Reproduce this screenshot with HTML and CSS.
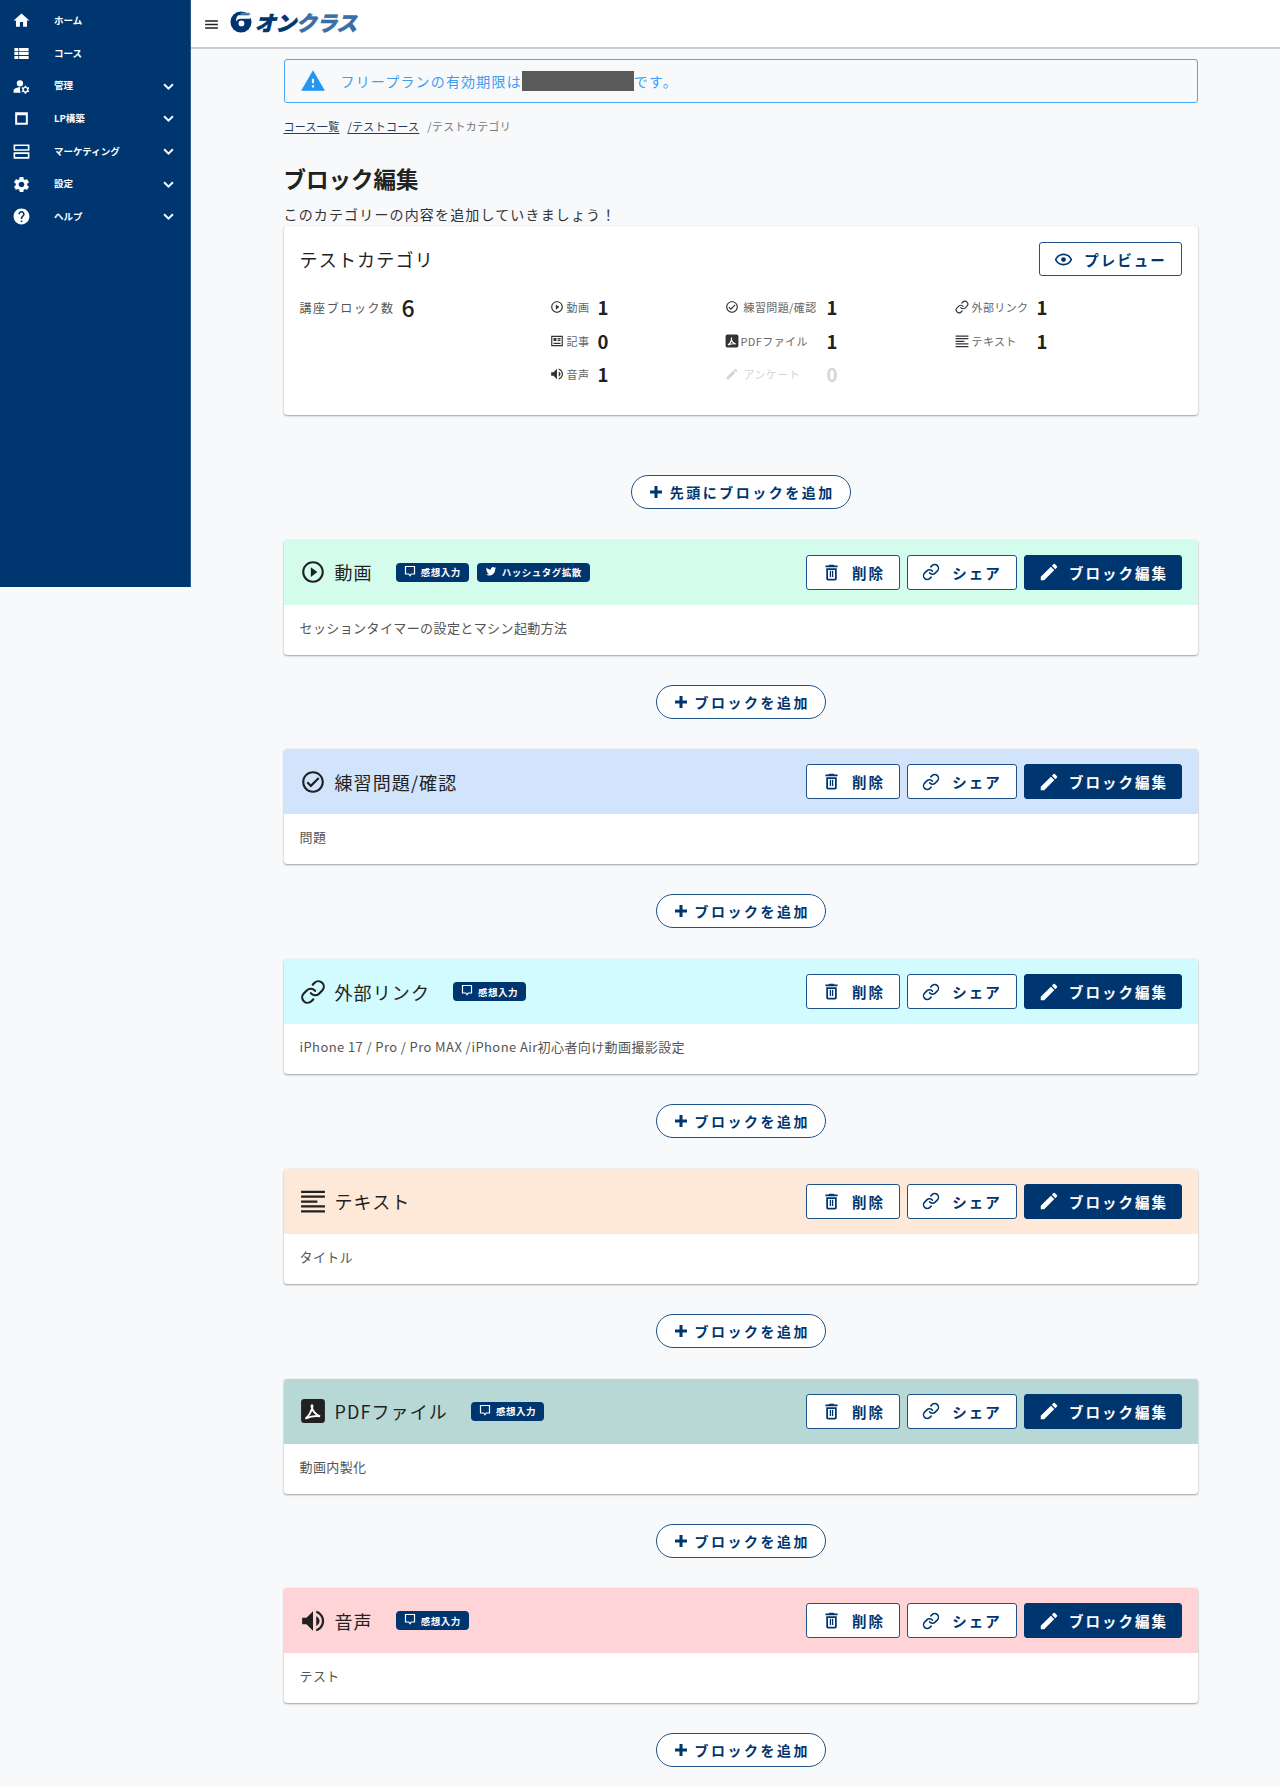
FILE: index.html
```html
<!DOCTYPE html>
<html lang="ja">
<head>
<meta charset="utf-8">
<title>ブロック編集</title>
<link rel="stylesheet" href="styles.css">
</head>
<body>
<svg class="defs" width="0" height="0" aria-hidden="true">
  <symbol id="i-home" viewBox="0 0 24 24"><path d="M10 20v-6h4v6h5v-8h3L12 3 2 12h3v8z"/></symbol>
  <symbol id="i-list" viewBox="0 0 24 24"><path d="M3 14h5v-4H3v4zm0 5h5v-4H3v4zM3 9h5V5H3v4zm6 5h12v-4H9v4zm0 5h12v-4H9v4zM9 5v4h12V5H9z"/></symbol>
  <symbol id="i-manage" viewBox="0 0 24 24"><path d="M10 4a4 4 0 1 0 0 8 4 4 0 0 0 0-8zM10.67 13.02C10.45 13.01 10.23 13 10 13c-2.42 0-4.68.67-6.61 1.82C2.51 15.34 2 16.32 2 17.35V20h9.26c-.79-1.13-1.26-2.51-1.26-4 0-1.07.25-2.07.67-2.98zM20.75 16c0-.22-.03-.42-.06-.63l1.14-1.01-1-1.73-1.45.49c-.32-.27-.68-.48-1.08-.63L18 11h-2l-.3 1.49c-.4.15-.76.36-1.08.63l-1.45-.49-1 1.73 1.14 1.01c-.03.21-.06.41-.06.63s.03.42.06.63l-1.14 1.01 1 1.73 1.45-.49c.32.27.68.48 1.08.63L16 21h2l.3-1.49c.4-.15.76-.36 1.08-.63l1.45.49 1-1.73-1.14-1.01c.03-.21.06-.41.06-.63zM17 18c-1.1 0-2-.9-2-2s.9-2 2-2 2 .9 2 2-.9 2-2 2z"/></symbol>
  <symbol id="i-square" viewBox="0 0 24 24"><path d="M4 4h16v16H4V4zm2.500 4v9.500h11V8h-11z" fill-rule="evenodd"/></symbol>
  <symbol id="i-rows" viewBox="0 0 24 24"><path fill-rule="evenodd" d="M2 3h20v8H2V3zm2 2v4h16V5H4zM2 13h20v8H2v-8zm2 2v4h16v-4H4z"/></symbol>
  <symbol id="i-gear" viewBox="0 0 24 24"><path d="M19.14 12.94c.04-.3.06-.61.06-.94 0-.32-.02-.64-.07-.94l2.03-1.58a.49.49 0 0 0 .12-.61l-1.92-3.32a.488.488 0 0 0-.59-.22l-2.39.96c-.5-.38-1.03-.7-1.62-.94l-.36-2.54a.484.484 0 0 0-.48-.41h-3.84c-.24 0-.43.17-.47.41l-.36 2.54c-.59.24-1.13.57-1.62.94l-2.39-.96c-.22-.08-.47 0-.59.22L2.74 8.87c-.12.21-.08.47.12.61l2.03 1.58c-.05.3-.09.63-.09.94s.02.64.07.94l-2.03 1.58a.49.49 0 0 0-.12.61l1.92 3.32c.12.22.37.29.59.22l2.39-.96c.5.38 1.03.7 1.62.94l.36 2.54c.05.24.24.41.48.41h3.84c.24 0 .44-.17.47-.41l.36-2.54c.59-.24 1.13-.56 1.62-.94l2.39.96c.22.08.47 0 .59-.22l1.92-3.32c.12-.22.07-.47-.12-.61l-2.01-1.58zM12 15.6c-1.98 0-3.6-1.62-3.6-3.6s1.62-3.6 3.6-3.6 3.6 1.62 3.6 3.6-1.62 3.6-3.6 3.6z"/></symbol>
  <symbol id="i-help" viewBox="0 0 24 24"><path d="M12 2C6.48 2 2 6.48 2 12s4.48 10 10 10 10-4.48 10-10S17.52 2 12 2zm1 17h-2v-2h2v2zm2.07-7.75l-.9.92C13.45 12.9 13 13.5 13 15h-2v-.5c0-1.1.45-2.1 1.17-2.83l1.24-1.26c.37-.36.59-.86.59-1.41 0-1.1-.9-2-2-2s-2 .9-2 2H8c0-2.21 1.79-4 4-4s4 1.79 4 4c0 .88-.36 1.68-.93 2.25z"/></symbol>
  <symbol id="i-chevron" viewBox="0 0 24 24"><path d="M5 8.500l7 7 7-7" fill="none" stroke="currentColor" stroke-width="3.200"/></symbol>
  <symbol id="i-menu" viewBox="0 0 24 24"><path d="M3 18h18v-2H3zm0-5h18v-2H3zm0-7v2h18V6z"/></symbol>
  <symbol id="i-warning" viewBox="0 0 24 24"><path d="M1 21h22L12 2 1 21zm12-3h-2v-2h2v2zm0-4h-2v-4h2v4z"/></symbol>
  <symbol id="i-eye" viewBox="0 0 24 24"><path d="M12 6.500a9.770 9.770 0 0 1 8.820 5.500 9.770 9.770 0 0 1-8.820 5.500A9.770 9.770 0 0 1 3.180 12 9.770 9.770 0 0 1 12 6.500m0-2C7 4.500 2.730 7.610 1 12c1.730 4.390 6 7.500 11 7.500s9.270-3.110 11-7.500c-1.730-4.390-6-7.500-11-7.500z"/><circle cx="12" cy="12" r="3"/></symbol>
  <symbol id="i-play" viewBox="0 0 24 24"><path d="M10 16.500l6-4.500-6-4.500v9zM12 2C6.480 2 2 6.480 2 12s4.480 10 10 10 10-4.480 10-10S17.520 2 12 2zm0 18c-4.410 0-8-3.590-8-8s3.590-8 8-8 8 3.590 8 8-3.590 8-8 8z"/></symbol>
  <symbol id="i-check" viewBox="0 0 24 24"><path d="M12 2C6.480 2 2 6.480 2 12s4.480 10 10 10 10-4.480 10-10S17.520 2 12 2zm0 18c-4.410 0-8-3.590-8-8s3.590-8 8-8 8 3.590 8 8-3.590 8-8 8z"/><path d="M16.590 7.580 10 14.170l-2.590-2.580L6 13l4 4 8-8z"/></symbol>
  <symbol id="i-link" viewBox="0 0 24 24"><path fill="none" stroke="currentColor" stroke-width="2" stroke-linecap="round" d="M10 13a5 5 0 0 0 7.540.54l3-3a5 5 0 0 0-7.070-7.070l-1.720 1.710M14 11a5 5 0 0 0-7.540-.54l-3 3a5 5 0 0 0 7.070 7.070l1.710-1.710"/></symbol>
  <symbol id="i-text" viewBox="0 0 24 24"><path d="M1 2.500h22v2H1zM1 7h22v2H1zM1 11.500h15v2H1zM1 16h22v2H1zM1 20.500h22v2H1z"/></symbol>
  <symbol id="i-pdf" viewBox="0 0 24 24"><path fill-rule="evenodd" d="M4 1h16a3 3 0 0 1 3 3v16a3 3 0 0 1-3 3H4a3 3 0 0 1-3-3V4a3 3 0 0 1 3-3z"/><path d="M5 19c3-2 6-7 6.500-11.500.1-1-.9-1-.9 0 .5 4 4 8.500 8 9.500-3.500-.7-8-.3-13.600 2z" fill="none" stroke="#fff" stroke-width="1.800"/></symbol>
  <symbol id="i-volume" viewBox="0 0 24 24"><path d="M2 9v6h4l6 6V3L6 9H2zm13-1.500v9c1.800-.8 3-2.500 3-4.500s-1.200-3.700-3-4.500zM15 2.500v2.200c3 1 5.200 3.900 5.200 7.300s-2.200 6.300-5.200 7.300v2.200c4.200-1 7.300-4.800 7.300-9.500S19.200 3.500 15 2.500z"/></symbol>
  <symbol id="i-article" viewBox="0 0 24 24"><path fill-rule="evenodd" d="M2 3h20v18H2V3zm2 2v14h16V5H4zm2 2h5v5H6V7zm7 0h5v2h-5V7zm0 3h5v2h-5v-2zM6 15h12v2H6v-2z"/></symbol>
  <symbol id="i-pencil" viewBox="0 0 24 24"><path d="M3 17.250V21h3.750L17.810 9.940l-3.750-3.750L3 17.250zM20.710 7.040a1 1 0 0 0 0-1.410l-2.340-2.340a1 1 0 0 0-1.410 0l-1.830 1.830 3.750 3.750 1.830-1.830z"/></symbol>
  <symbol id="i-trash" viewBox="0 0 24 24"><path d="M16 9v10H8V9h8m-1.500-6h-5l-1 1H5v2h14V4h-3.500l-1-1zM18 7H6v12c0 1.100.9 2 2 2h8c1.100 0 2-.9 2-2V7z"/><path d="M10 10h1.500v7H10zM12.500 10H14v7h-1.500z"/></symbol>
  <symbol id="i-plus" viewBox="0 0 24 24"><path d="M20 14h-6v6h-4v-6H4v-4h6V4h4v6h6v4z"/></symbol>
  <symbol id="i-comment" viewBox="0 0 24 24"><path d="M3 3h18v15h-6.500L12 21.500 9.500 18H3z" fill="none" stroke="currentColor" stroke-width="2.400"/></symbol>
  <symbol id="i-twitter" viewBox="0 0 24 24"><path d="M22.460 6c-.77.35-1.600.58-2.460.69.88-.53 1.560-1.370 1.880-2.380-.83.5-1.750.85-2.720 1.050C18.370 4.500 17.260 4 16 4c-2.350 0-4.270 1.920-4.270 4.290 0 .34.04.67.11.98C8.280 9.090 5.110 7.380 3 4.790c-.37.63-.58 1.370-.58 2.150 0 1.490.75 2.810 1.910 3.560-.71 0-1.370-.2-1.950-.5v.03c0 2.080 1.480 3.820 3.440 4.210a4.220 4.220 0 0 1-1.930.07 4.280 4.280 0 0 0 4 2.980 8.521 8.521 0 0 1-5.330 1.840c-.34 0-.68-.02-1.020-.06C3.440 20.290 5.700 21 8.120 21 16 21 20.330 14.460 20.330 8.790c0-.19 0-.37-.01-.56.84-.6 1.560-1.360 2.140-2.230z"/></symbol>
</svg>

<div class="app">
  <nav class="sidebar">
    <a class="nav-item"><svg class="nav-icon"><use href="#i-home"/></svg><span class="nav-label">ホーム</span></a>
    <a class="nav-item"><svg class="nav-icon"><use href="#i-list"/></svg><span class="nav-label">コース</span></a>
    <a class="nav-item"><svg class="nav-icon"><use href="#i-manage"/></svg><span class="nav-label">管理</span><svg class="nav-chevron"><use href="#i-chevron"/></svg></a>
    <a class="nav-item"><svg class="nav-icon"><use href="#i-square"/></svg><span class="nav-label">LP構築</span><svg class="nav-chevron"><use href="#i-chevron"/></svg></a>
    <a class="nav-item"><svg class="nav-icon"><use href="#i-rows"/></svg><span class="nav-label">マーケティング</span><svg class="nav-chevron"><use href="#i-chevron"/></svg></a>
    <a class="nav-item"><svg class="nav-icon"><use href="#i-gear"/></svg><span class="nav-label">設定</span><svg class="nav-chevron"><use href="#i-chevron"/></svg></a>
    <a class="nav-item"><svg class="nav-icon"><use href="#i-help"/></svg><span class="nav-label">ヘルプ</span><svg class="nav-chevron"><use href="#i-chevron"/></svg></a>
  </nav>

  <div class="main">
    <header class="topbar">
      <svg class="menu-icon"><use href="#i-menu"/></svg>
      <svg class="logo-mark" viewBox="0 0 24 24"><circle cx="12" cy="12" r="11.500" fill="#003670"/><circle cx="12.500" cy="13.500" r="3.200" fill="#fff"/><path d="M9 4.500h14.500l-1.500 4H12c-3 0-5 2-5.500 3C6.500 8.500 7 6 9 4.500z" fill="#fff"/><path d="M12 2h9l1.500 2H11z" fill="#4f7fb0"/></svg>
      <span class="logo-text">オン<span class="logo-light">クラス</span></span>
    </header>

    <main class="content">
      <div class="alert">
        <svg class="alert-icon"><use href="#i-warning"/></svg>
        <span class="alert-text">フリープランの有効期限は</span><span class="redacted"></span><span class="alert-text">です。</span>
      </div>

      <div class="crumbs">
        <a class="crumb-link">コース一覧</a>
        <a class="crumb-link">/テストコース</a>
        <span class="crumb-current">/テストカテゴリ</span>
      </div>

      <h1 class="page-title">ブロック編集</h1>
      <p class="page-sub">このカテゴリーの内容を追加していきましょう！</p>

      <section class="summary">
        <div class="summary-head">
          <h2 class="summary-title">テストカテゴリ</h2>
          <a class="btn btn-preview"><svg class="btn-icon"><use href="#i-eye"/></svg>プレビュー</a>
        </div>
        <div class="stats">
          <div class="stat-total"><span class="total-label">講座ブロック数</span><span class="stat-num total-num">6</span></div>
          <div class="stat-col col-a">
            <div class="stat"><svg class="stat-icon"><use href="#i-play"/></svg><span class="stat-label">動画</span><span class="stat-num">1</span></div>
            <div class="stat"><svg class="stat-icon"><use href="#i-article"/></svg><span class="stat-label">記事</span><span class="stat-num">0</span></div>
            <div class="stat"><svg class="stat-icon"><use href="#i-volume"/></svg><span class="stat-label">音声</span><span class="stat-num">1</span></div>
          </div>
          <div class="stat-col col-b">
            <div class="stat"><svg class="stat-icon"><use href="#i-check"/></svg><span class="stat-label">練習問題/確認</span><span class="stat-num">1</span></div>
            <div class="stat stat-tight"><svg class="stat-icon"><use href="#i-pdf"/></svg><span class="stat-label">PDFファイル</span><span class="stat-num">1</span></div>
            <div class="stat stat-off"><svg class="stat-icon"><use href="#i-pencil"/></svg><span class="stat-label">アンケート</span><span class="stat-num">0</span></div>
          </div>
          <div class="stat-col col-c">
            <div class="stat"><svg class="stat-icon"><use href="#i-link"/></svg><span class="stat-label">外部リンク</span><span class="stat-num">1</span></div>
            <div class="stat"><svg class="stat-icon"><use href="#i-text"/></svg><span class="stat-label">テキスト</span><span class="stat-num">1</span></div>
          </div>
        </div>
      </section>

      <div class="add-row add-first"><a class="add-btn"><svg class="add-icon"><use href="#i-plus"/></svg>先頭にブロックを追加</a></div>

      <article class="block">
        <div class="block-head head-video">
          <svg class="block-icon"><use href="#i-play"/></svg><span class="block-title">動画</span>
          <span class="pill"><svg class="pill-icon"><use href="#i-comment"/></svg>感想入力</span>
          <span class="pill"><svg class="pill-icon"><use href="#i-twitter"/></svg>ハッシュタグ拡散</span>
          <div class="actions"><a class="btn btn-del"><svg class="btn-icon icon-trash"><use href="#i-trash"/></svg>削除</a><a class="btn btn-share"><svg class="btn-icon icon-link"><use href="#i-link"/></svg>シェア</a><a class="btn btn-edit"><svg class="btn-icon icon-pencil"><use href="#i-pencil"/></svg>ブロック編集</a></div>
        </div>
        <p class="block-body">セッションタイマーの設定とマシン起動方法</p>
      </article>
      <div class="add-row"><a class="add-btn"><svg class="add-icon"><use href="#i-plus"/></svg>ブロックを追加</a></div>

      <article class="block">
        <div class="block-head head-quiz">
          <svg class="block-icon"><use href="#i-check"/></svg><span class="block-title">練習問題/確認</span>
          <div class="actions"><a class="btn btn-del"><svg class="btn-icon icon-trash"><use href="#i-trash"/></svg>削除</a><a class="btn btn-share"><svg class="btn-icon icon-link"><use href="#i-link"/></svg>シェア</a><a class="btn btn-edit"><svg class="btn-icon icon-pencil"><use href="#i-pencil"/></svg>ブロック編集</a></div>
        </div>
        <p class="block-body">問題</p>
      </article>
      <div class="add-row"><a class="add-btn"><svg class="add-icon"><use href="#i-plus"/></svg>ブロックを追加</a></div>

      <article class="block">
        <div class="block-head head-link">
          <svg class="block-icon"><use href="#i-link"/></svg><span class="block-title">外部リンク</span>
          <span class="pill"><svg class="pill-icon"><use href="#i-comment"/></svg>感想入力</span>
          <div class="actions"><a class="btn btn-del"><svg class="btn-icon icon-trash"><use href="#i-trash"/></svg>削除</a><a class="btn btn-share"><svg class="btn-icon icon-link"><use href="#i-link"/></svg>シェア</a><a class="btn btn-edit"><svg class="btn-icon icon-pencil"><use href="#i-pencil"/></svg>ブロック編集</a></div>
        </div>
        <p class="block-body">iPhone 17 / Pro / Pro MAX /iPhone Air初心者向け動画撮影設定</p>
      </article>
      <div class="add-row"><a class="add-btn"><svg class="add-icon"><use href="#i-plus"/></svg>ブロックを追加</a></div>

      <article class="block">
        <div class="block-head head-text">
          <svg class="block-icon"><use href="#i-text"/></svg><span class="block-title">テキスト</span>
          <div class="actions"><a class="btn btn-del"><svg class="btn-icon icon-trash"><use href="#i-trash"/></svg>削除</a><a class="btn btn-share"><svg class="btn-icon icon-link"><use href="#i-link"/></svg>シェア</a><a class="btn btn-edit"><svg class="btn-icon icon-pencil"><use href="#i-pencil"/></svg>ブロック編集</a></div>
        </div>
        <p class="block-body">タイトル</p>
      </article>
      <div class="add-row"><a class="add-btn"><svg class="add-icon"><use href="#i-plus"/></svg>ブロックを追加</a></div>

      <article class="block">
        <div class="block-head head-pdf">
          <svg class="block-icon"><use href="#i-pdf"/></svg><span class="block-title">PDFファイル</span>
          <span class="pill"><svg class="pill-icon"><use href="#i-comment"/></svg>感想入力</span>
          <div class="actions"><a class="btn btn-del"><svg class="btn-icon icon-trash"><use href="#i-trash"/></svg>削除</a><a class="btn btn-share"><svg class="btn-icon icon-link"><use href="#i-link"/></svg>シェア</a><a class="btn btn-edit"><svg class="btn-icon icon-pencil"><use href="#i-pencil"/></svg>ブロック編集</a></div>
        </div>
        <p class="block-body">動画内製化</p>
      </article>
      <div class="add-row"><a class="add-btn"><svg class="add-icon"><use href="#i-plus"/></svg>ブロックを追加</a></div>

      <article class="block">
        <div class="block-head head-audio">
          <svg class="block-icon"><use href="#i-volume"/></svg><span class="block-title">音声</span>
          <span class="pill"><svg class="pill-icon"><use href="#i-comment"/></svg>感想入力</span>
          <div class="actions"><a class="btn btn-del"><svg class="btn-icon icon-trash"><use href="#i-trash"/></svg>削除</a><a class="btn btn-share"><svg class="btn-icon icon-link"><use href="#i-link"/></svg>シェア</a><a class="btn btn-edit"><svg class="btn-icon icon-pencil"><use href="#i-pencil"/></svg>ブロック編集</a></div>
        </div>
        <p class="block-body">テスト</p>
      </article>
      <div class="add-row"><a class="add-btn"><svg class="add-icon"><use href="#i-plus"/></svg>ブロックを追加</a></div>
    </main>
  </div>
</div>
</body>
</html>
```
FILE: styles.css
```css
* { box-sizing: border-box; }
html, body { margin: 0; padding: 0; }
body {
  background: #f8f9fb;
  color: #212121;
  font-family: "Noto Sans CJK JP", "Noto Sans", sans-serif;
  font-size: 14px;
}
svg { fill: currentColor; flex: none; display: block; }
.defs { position: absolute; }
a { color: inherit; text-decoration: none; }
h1, h2, p { margin: 0; font-weight: 400; }

.app { display: flex; align-items: flex-start; min-height: 1787px; }

/* sidebar */
.sidebar {
  width: 191px;
  height: 587px;
  flex: none;
  background: #003670;
  color: #fff;
  padding-top: 4.5px;
  border-right: 1px solid #2c5a8c;
}
.nav-item { display: flex; align-items: center; height: 32.67px; }
.nav-icon { width: 19px; height: 19px; margin-left: 11.5px; }
.nav-label { margin-left: 23.5px; font-size: 9.5px; font-weight: 700; line-height: 1; flex: 1; }
.nav-chevron { width: 15px; height: 15px; margin-right: 14px; }

/* topbar */
.main { flex: 1; min-width: 0; }
.topbar {
  height: 49px;
  background: #fff;
  border-bottom: 2px solid #cbcbcb;
  display: flex;
  align-items: center;
  padding-left: 12px;
  padding-bottom: 3px;
}
.menu-icon { width: 17px; height: 17px; color: #212121; margin-top: 4px; }
.logo-mark { width: 22px; height: 22px; margin-left: 10px; }
.logo-text {
  display: inline-block;
  margin-left: 5px;
  color: #003670;
  font-size: 21px;
  line-height: 22px;
  font-weight: 900;
  letter-spacing: -.5px;
  -webkit-text-stroke: .5px currentColor;
  transform: skewX(-14deg);
}
.logo-light { color: #3a6ea5; }

/* content */
.content { width: 914.5px; margin-left: 92.5px; }
.alert {
  margin-top: 10px;
  height: 44px;
  border: 1px solid #4aa5f5;
  border-radius: 3px;
  display: flex;
  align-items: center;
  padding-left: 15px;
}
.alert-icon { width: 26px; height: 26px; color: #2196f3; margin-right: 15px; }
.alert-text { color: #3f9df0; letter-spacing: 1.180px; font-size: 14px; }
.redacted { width: 112px; height: 20px; background: #5a5a5a; }

.crumbs { display: flex; gap: 8px; margin-top: 13px; height: 20px; align-items: center; font-size: 11px; letter-spacing: .3px; }
.crumb-link { color: #233c5c; text-decoration: underline; text-underline-offset: 2px; }
.crumb-current { color: #777; }

.page-title { font-size: 22.5px; font-weight: 700; line-height: 30px; margin-top: 27px; color: #212121; }
.page-sub { font-size: 14px; letter-spacing: 1.150px; line-height: 20px; margin-top: 11px; color: #333; height: 22px; }

.summary {
  background: #fff;
  border-radius: 3px;
  height: 189px;
  box-shadow: 0 1px 2px rgba(0,0,0,.35), 0 0 1px rgba(0,0,0,.2);
  padding: 16px;
}
.summary-head { display: flex; justify-content: space-between; align-items: center; height: 34px; }
.summary-title { font-size: 18px; letter-spacing: 1.200px; color: #222; }
.stats { display: flex; margin-top: 14.5px; align-items: flex-start; }
.stat-total { width: 250px; display: flex; align-items: center; height: 33.5px; }
.total-label { font-size: 12px; letter-spacing: 1.600px; color: #555; width: 102px; }
.stat-num { font-size: 18.5px; font-weight: 700; line-height: 1; color: #212121; }
.total-num { font-size: 23px; font-weight: 500; }
.stat-col { display: flex; flex-direction: column; }
.col-a { width: 175px; --label: 48px; --label-gap: 3px; }
.col-b { width: 230px; --label: 102px; --label-gap: 5px; }
.col-c { --label: 82px; --label-gap: 3px; }
.stat-tight { --label-gap: 2px; }
.stat { height: 33.5px; display: flex; align-items: center; }
.stat-icon { width: 14px; height: 14px; color: #333; }
.stat-label { font-size: 11px; color: #666; letter-spacing: .4px; margin-left: var(--label-gap); width: calc(var(--label) - 14px - var(--label-gap)); white-space: nowrap; }
.stat-off .stat-icon, .stat-off .stat-label, .stat-off .stat-num { color: #d5d5d5; }

/* buttons */
.btn {
  display: flex;
  align-items: center;
  justify-content: center;
  border: 1px solid #1f5289;
  border-radius: 3px;
  background: #fff;
  color: #003670;
  font-size: 14.5px;
  font-weight: 700;
  letter-spacing: 2px;
  height: 35px;
}
.btn-icon { width: 19px; height: 19px; margin-right: 11px; }
.icon-trash { width: 21px; height: 21px; margin-right: 10px; }
.icon-link { width: 18px; height: 18px; margin-right: 12px; }
.icon-pencil { width: 22px; height: 22px; margin-right: 9px; }
.btn-preview { width: 143px; height: 34px; }
.btn-del { width: 94px; }
.btn-share { width: 110px; }
.btn-edit { width: 158px; background: #003670; color: #fff; border-color: #003670; }

.add-row { display: flex; justify-content: center; height: 34px; margin: 30px 0 30.8px; }
.add-first { margin-top: 60px; margin-bottom: 30.5px; }
.add-btn {
  display: flex;
  align-items: center;
  justify-content: center;
  height: 34px;
  padding: 0 15px;
  border: 1px solid #1f5289;
  border-radius: 17px;
  background: #fff;
  color: #003670;
  font-size: 14px;
  font-weight: 700;
  letter-spacing: 2.500px;
}
.add-icon { width: 18px; height: 18px; margin-right: 5px; }

/* blocks */
.block {
  background: #fff;
  border-radius: 3px;
  box-shadow: 0 1px 2px rgba(0,0,0,.35), 0 0 1px rgba(0,0,0,.2);
  overflow: hidden;
  height: 115px;
}
.block-head { height: 65px; display: flex; align-items: center; padding: 0 16px; }
.head-video { background: #d4fcec; }
.head-quiz { background: #d2e4fc; }
.head-link { background: #d1fbfe; }
.head-text { background: #fee8d8; }
.head-pdf { background: #b8d8d6; }
.head-audio { background: #fed4d6; }
.block-icon { width: 26px; height: 26px; color: #212121; }
.block-title { font-size: 18px; letter-spacing: 1.100px; margin-left: 9px; color: #222; margin-right: 23px; }
.pill {
  display: flex;
  align-items: center;
  height: 19px;
  background: #003670;
  color: #fff;
  border-radius: 4px;
  font-size: 9.5px;
  font-weight: 700;
  letter-spacing: .5px;
  padding: 0 8px;
  margin-right: 8px;
}
.pill-icon { width: 12px; height: 12px; margin-right: 5px; margin-top: -3px; }
.actions { margin-left: auto; display: flex; gap: 7px; }
.block-body { padding: 0 16px; line-height: 46px; font-size: 13px; letter-spacing: .4px; color: #555; }
```
